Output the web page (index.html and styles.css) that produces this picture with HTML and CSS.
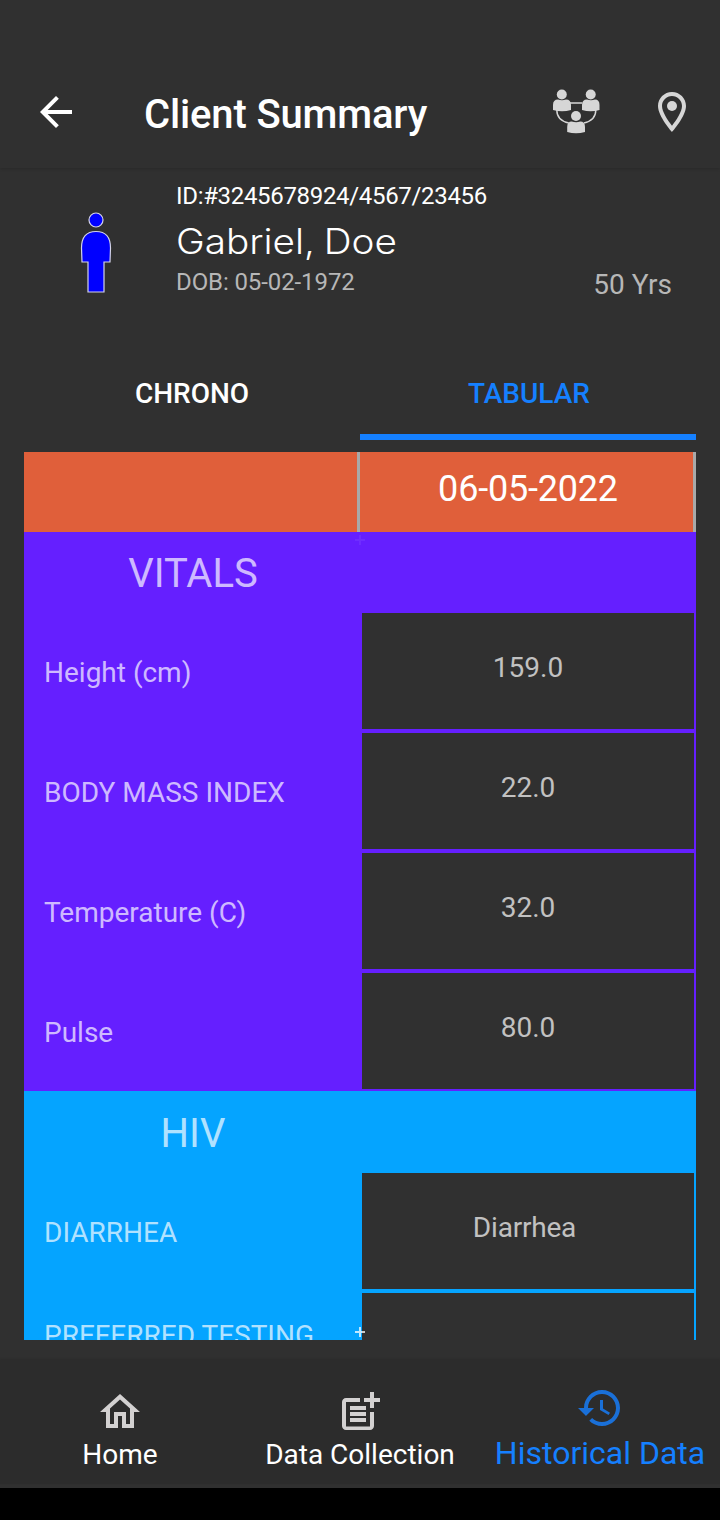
FILE: index.html
```html
<!DOCTYPE html>
<html lang="en">
<head>
  <meta charset="utf-8">
  <title>Client Summary</title>
  <link rel="stylesheet" href="styles.css">
</head>
<body>
  <header class="app-bar">
    <svg class="back" viewBox="0 0 24 24"><path d="M20 11H7.83l5.59-5.59L12 4l-8 8 8 8 1.41-1.41L7.83 13H20v-2z"/></svg>
    <h1>Client Summary</h1>
    <svg class="group" viewBox="0 0 48 48">
      <path class="link" d="M18 15h12M4.800 22c0 7 5 11.500 12 13M43.800 22c0 7-5 11.500-12 13"/>
      <circle cx="9.800" cy="6.500" r="5"/>
      <circle cx="38.700" cy="6.500" r="5"/>
      <circle cx="24" cy="28" r="5"/>
      <path d="M1 22v-5q0-5.500 5-5.500q4 1.500 8 0q5 0 5 5.500v5q-9 2.500-18 0zM30 22v-5q0-5.500 5-5.500q4 1.500 8 0q4.500 0 4.500 5.500v5q-9 2.500-17.500 0zM15.200 44v-5q0-5.500 4.500-5.500q4.500 1.500 8.500 0q4.800 0 4.800 5.500v5q-9 2.500-17.800 0z"/>
    </svg>
    <svg class="pin" viewBox="0 0 24 24"><path d="M12 2C8.130 2 5 5.130 5 9c0 5.250 7 13 7 13s7-7.750 7-13c0-3.870-3.130-7-7-7zM7 9c0-2.760 2.240-5 5-5s5 2.240 5 5c0 2.880-2.880 7.190-5 9.880C9.920 16.210 7 11.850 7 9z"/><circle cx="12" cy="9" r="2.500"/></svg>
  </header>

  <section class="client">
    <svg class="person" viewBox="0 0 32 82">
      <circle cx="16" cy="8" r="7"/>
      <path d="M8 80V50H2L1.500 36C1.500 25 6 19.500 16 19.500S30.500 25 30.500 36L30 50H24V80z"/>
    </svg>
    <div class="info">
      <div class="client-id">ID:#3245678924/4567/23456</div>
      <div class="name">Gabriel, Doe</div>
      <div class="dob">DOB: 05-02-1972</div>
    </div>
    <div class="age">50 Yrs</div>
  </section>

  <nav class="tabs">
    <a class="tab">CHRONO</a>
    <a class="tab active">TABULAR</a>
  </nav>

  <main class="table">
    <div class="row date-row">
      <div></div>
      <div class="date">06-05-2022</div>
    </div>

    <section class="vitals">
      <div class="row section-title"><h2>VITALS</h2></div>
      <div class="row"><div class="label">Height (cm)</div><div class="value">159.0</div></div>
      <div class="row"><div class="label">BODY MASS INDEX</div><div class="value">22.0</div></div>
      <div class="row"><div class="label">Temperature (C)</div><div class="value">32.0</div></div>
      <div class="row"><div class="label">Pulse</div><div class="value">80.0</div></div>
      <span class="cross"></span>
    </section>

    <section class="hiv">
      <div class="row section-title"><h2>HIV</h2></div>
      <div class="row"><div class="label">DIARRHEA</div><div class="value text">Diarrhea</div></div>
      <div class="row"><div class="label two-line">PREFERRED TESTING</div><div class="value"></div></div>
      <span class="cross"></span>
    </section>
  </main>

  <footer class="bottom-nav">
    <a class="item">
      <svg viewBox="0 0 24 24"><path d="M12 5.690l5 4.500V18h-2v-6H9v6H7v-7.810l5-4.500M12 3L2 12h3v8h6v-6h2v6h6v-8h3L12 3z"/></svg>
      <span>Home</span>
    </a>
    <a class="item">
      <svg viewBox="0 0 24 24"><path d="M17 19.220H5V7h7V5H5c-1.100 0-2 .9-2 2v12c0 1.100.9 2 2 2h12c1.100 0 2-.9 2-2v-7h-2v7.220z"/><path d="M19 2h-2v3h-3v2h3v2.990h2V7h3V5h-3zM7 9h8v2H7zM7 12v2h8v-2H7zM7 15h8v2H7z"/></svg>
      <span>Data Collection</span>
    </a>
    <a class="item active">
      <svg viewBox="0 0 24 24"><path d="M13 3c-4.970 0-9 4.030-9 9H1l3.890 3.890.07.14L9 12H6c0-3.870 3.130-7 7-7s7 3.130 7 7-3.130 7-7 7c-1.930 0-3.680-.79-4.940-2.060l-1.420 1.420C8.270 19.990 10.510 21 13 21c4.970 0 9-4.030 9-9s-4.030-9-9-9zm-1 5v5l4.280 2.540.72-1.210-3.500-2.080V8H12z"/></svg>
      <span>Historical Data</span>
    </a>
  </footer>
  <div class="system-bar"></div>
</body>
</html>
```

FILE: styles.css
```css
* {
  box-sizing: border-box;
}
body {
  margin: 0;
  width: 720px;
  height: 1520px;
  display: flex;
  flex-direction: column;
  overflow: hidden;
  background: #303030;
  color: #fff;
  font-family: Roboto, sans-serif;
}
h1, h2 {
  margin: 0;
}

/* top bar */
.app-bar {
  height: 168px;
  padding: 56px 24px 0 32px;
  display: flex;
  align-items: center;
  box-shadow: 0 1px 3px rgba(0, 0, 0, 0.15);
}
.app-bar svg {
  width: 48px;
  height: 48px;
  fill: #d6d6d6;
}
.app-bar .back {
  fill: #fff;
}
.app-bar h1 {
  flex: 1;
  padding: 4px 0 0 64px;
  font-size: 40px;
  font-weight: 500;
  letter-spacing: -0.15px;
}
.app-bar .pin {
  margin-left: 48px;
}
.app-bar .link {
  fill: none;
  stroke: #d6d6d6;
  stroke-width: 1.4;
}

/* client */
.client {
  height: 180px;
  padding: 12px 48px 0 80px;
  display: flex;
}
.person {
  width: 32px;
  height: 82px;
  margin-top: 32px;
  fill: #00f;
  stroke: #d4d4e8;
  stroke-width: 1.2;
}
.info {
  flex: 1;
  margin-left: 64px;
}
.client-id, .dob {
  font-size: 24px;
  line-height: 32px;
}
.client-id {
  letter-spacing: -0.32px;
}
.name {
  padding-top: 2px;
  font-family: Inter, sans-serif;
  font-size: 35px;
  font-weight: 350;
  line-height: 54px;
  word-spacing: -2px;
  transform: scaleX(1.105);
  transform-origin: left;
}
.dob, .age {
  color: #b7b7b7;
}
.dob {
  line-height: 28px;
  letter-spacing: -0.1px;
}
.age {
  margin-top: 89px;
  font-size: 28px;
  line-height: 32px;
}

/* tabs */
.tabs {
  height: 92px;
  margin: 0 24px 12px;
  display: grid;
  grid-template: 100% / 1fr 1fr;
}
.tab {
  line-height: 92px;
  font-size: 28px;
  font-weight: 500;
  text-align: center;
  border-bottom: 6px solid transparent;
}
.tab.active {
  padding-left: 2px;
  color: #1580ff;
  border-color: #1580ff;
}

/* results table */
.table {
  height: 888px;
  margin: 0 24px;
  overflow: hidden;
}
.row {
  height: 120px;
  display: grid;
  grid-template: 100% / 1fr 1fr;
}
.date-row {
  height: 80px;
  background: #e05f3a;
  font-size: 36px;
  line-height: 74px;
  text-align: center;
}
.date-row div {
  border-right: 3px solid #a9a9a9;
}
.date-row .date {
  padding-left: 3px;
  letter-spacing: -0.2px;
}
.table section {
  position: relative;
}
.vitals {
  --section: #651fff;
}
.hiv {
  --section: #05a4ff;
}
.section-title {
  height: 80px;
  background: var(--section);
}
.vitals .section-title {
  height: 79px;
}
.section-title h2 {
  padding-left: 2px;
  color: rgba(255, 255, 255, 0.7);
  font-size: 40px;
  font-weight: 400;
  line-height: 84px;
  text-align: center;
}
.hiv .section-title h2 {
  line-height: 86px;
}
.label {
  padding-left: 20px;
  background: var(--section);
  color: rgba(255, 255, 255, 0.7);
  font-size: 28px;
  line-height: 124px;
}
.label.two-line {
  line-height: 90px;
}
.value {
  border: 2px solid var(--section);
  color: #c1c1c1;
  font-size: 28px;
  line-height: 109px;
  text-align: center;
}
.value.text {
  padding-right: 7px;
  letter-spacing: -0.2px;
}
/* small plus mark where the columns meet */
.cross {
  position: absolute;
  left: 331px;
  top: 3px;
  width: 10px;
  height: 10px;
  opacity: 0.06;
  background:
    linear-gradient(#fff, #fff) center / 10px 2px no-repeat,
    linear-gradient(#fff, #fff) center / 2px 10px no-repeat;
}
.hiv .cross {
  top: 236px;
  opacity: 0.75;
}

/* bottom nav */
.bottom-nav {
  height: 124px;
  margin-top: 20px;
  display: flex;
  background: #2c2c2c;
  box-shadow: 0 -1px 2px rgba(0, 0, 0, 0.12);
}
.item {
  flex: 1;
  padding-top: 28px;
  display: flex;
  flex-direction: column;
  align-items: center;
  font-size: 28px;
  line-height: 38px;
  white-space: nowrap;
}
.item svg {
  width: 48px;
  height: 48px;
  fill: #d3d1d1;
}
.item.active {
  padding-top: 24px;
  color: #1580ff;
  font-size: 32px;
  line-height: 42px;
}
.item.active svg {
  fill: #1a70d8;
}
.system-bar {
  height: 32px;
  margin-top: 4px;
  background: #000;
}
```
